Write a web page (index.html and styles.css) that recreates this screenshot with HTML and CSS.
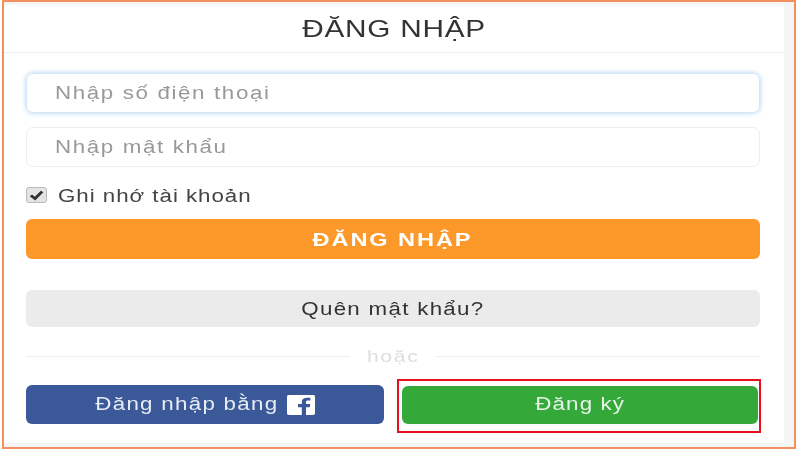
FILE: index.html
```html
<!DOCTYPE html>
<html lang="vi">
<head>
<meta charset="utf-8">
<title>Đăng nhập</title>
<link rel="stylesheet" href="styles.css">
</head>
<body>
<div class="frame">
  <div class="card">
    <h1 class="title"><span class="wide">ĐĂNG NHẬP</span></h1>
    <form class="form">
      <div class="field field-focus"><span class="wide wide-left">Nhập số điện thoại</span></div>
      <div class="field"><span class="wide wide-left">Nhập mật khẩu</span></div>
      <label class="remember">
        <span class="check"><svg viewBox="0 0 12 12" width="15" height="12" preserveAspectRatio="none"><path d="M1.500 6.400 L4.800 9.600 L10.500 2.500" fill="none" stroke="#333" stroke-width="2.600"/></svg></span>
        <span class="wide wide-left remember-text">Ghi nhớ tài khoản</span>
      </label>
      <button type="button" class="btn btn-primary"><span class="wide">ĐĂNG NHẬP</span></button>
      <button type="button" class="btn btn-forgot"><span class="wide">Quên mật khẩu?</span></button>
      <div class="divider"><span class="rule"></span><span class="or wide">hoặc</span><span class="rule"></span></div>
      <div class="actions">
        <button type="button" class="btn btn-fb"><span class="wide fb-label">Đăng nhập bằng</span>
          <svg class="fb-icon" viewBox="0 0 28 28" width="28" height="20" preserveAspectRatio="none"><rect x="0" y="0" width="28" height="28" rx="2" fill="#fff"/><path d="M19 28V17h3.700l.6-4.400H19V9.900c0-1.300.4-2.100 2.200-2.100h2.200V3.900c-.4 0-1.700-.2-3.200-.2-3.200 0-5.400 2-5.400 5.500v3.400H11V17h3.800v11z" fill="#3b5998"/></svg>
        </button>
        <div class="highlight"><button type="button" class="btn btn-register"><span class="wide">Đăng ký</span></button></div>
      </div>
    </form>
  </div>
</div>
</body>
</html>
```
FILE: styles.css
```css
* { box-sizing: border-box; }
html, body { margin: 0; padding: 0; background: #fff; }
body { width: 800px; height: 450px; overflow: hidden; font-family: "Liberation Sans", Arial, sans-serif; }
.frame {
  margin-left: 2px; width: 794px; height: 449px;
  border: 2px solid #f2905f;
  background: #f5f5f5;
  padding: 3px 10px 4px 0;
  filter: blur(.35px);
}
.card { background: #fff; height: 438px; display: flex; flex-direction: column; border-radius: 2px; }
.wide { display: inline-block; transform: scaleX(1.24); white-space: nowrap; }
.wide-left { transform-origin: left center; }
.title {
  margin: 0; height: 48px; flex: none;
  border-bottom: 1px solid #eee;
  font-weight: 400; font-size: 24px; line-height: 47px; color: #333;
  text-align: center;
}
.title .wide { letter-spacing: 0.6px; }
.form { padding: 20px 24px 0 22px; display: flex; flex-direction: column; }
.field {
  height: 40px; border: 1px solid #eee; border-radius: 7px;
  padding-left: 28px; line-height: 39px;
  font-size: 18px; letter-spacing: 1.320px; color: #999;
  margin-bottom: 14px;
}
.field-focus { border-color: #d5e6f5; box-shadow: 0 0 5px rgba(102,175,233,.55); }
.remember { display: flex; align-items: center; gap: 11px; height: 20px; margin-top: 4px; font-size: 18px; letter-spacing: .78px; color: #444; }
.remember-text { padding-top: 2px; }
.check {
  width: 21px; height: 16px; border-radius: 3px; background: #e4e4e4; border: 1px solid #bbb;
  display: flex; align-items: center; justify-content: center; flex: none;
}
.btn {
  display: block; width: 100%; border: 0; border-radius: 6px; padding: 0;
  font-family: inherit; text-align: center; cursor: pointer;
}
.btn-primary { height: 40px; padding-top: 2px; margin-top: 14px; background: #fd982b; color: #fff; font-size: 19px; font-weight: 700; letter-spacing: 1.550px; }
.btn-forgot { height: 37px; padding-top: 2px; margin-top: 31px; background: #ebebeb; color: #333; font-size: 18px; letter-spacing: 1.050px; }
.divider { display: flex; align-items: center; height: 22px; margin-top: 18px; gap: 22px; }
.rule { flex: 1; height: 1px; background: #eee; }
.or { padding-top: 2px; font-size: 17px; letter-spacing: 1.400px; color: #ddd; }
.actions { display: grid; grid-template-columns: 358px 364px; justify-content: space-between; align-items: start; margin: 12px -1px 0 0; }
.btn-fb {
  height: 39px; margin-top: 6px; background: #3b5998; color: #e8ecf4; font-size: 18px; letter-spacing: 1.040px;
  display: flex; align-items: center; justify-content: center; gap: 8px;
}
.fb-label { margin: 0 18px; }
.fb-icon { flex: none; margin-top: 1px; }
.highlight { border: 2.500px solid #e8101c; padding: 4.500px 0 6px 3px; height: 54px; }
.btn-register { height: 38px; width: 356px; background: #34a93a; color: #e8f5e8; font-size: 18px; letter-spacing: .91px; }
```
